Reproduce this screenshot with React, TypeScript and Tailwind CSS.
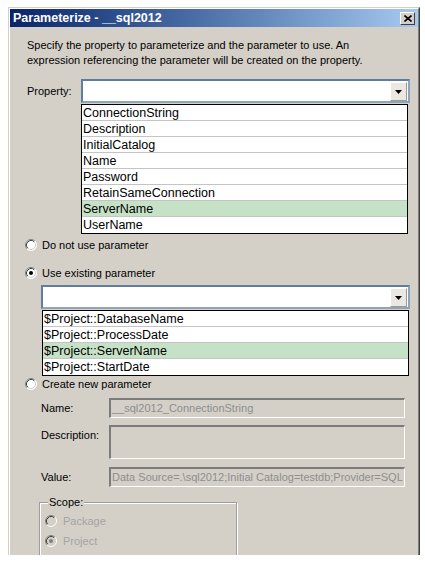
import React from 'react';

const propertyItems = [
  'ConnectionString',
  'Description',
  'InitialCatalog',
  'Name',
  'Password',
  'RetainSameConnection',
  'ServerName',
  'UserName',
];

const paramItems = [
  '$Project::DatabaseName',
  '$Project::ProcessDate',
  '$Project::ServerName',
  '$Project::StartDate',
];

const Radio = ({ checked = false, disabled = false }: { checked?: boolean; disabled?: boolean }) => (
  <svg width="12" height="12" viewBox="0 0 12 12" className="shrink-0">
    <circle cx="6" cy="6" r="5.5" fill={disabled ? '#d4d0c8' : '#ffffff'} />
    <path d="M2.11 9.89A5.5 5.5 0 0 1 9.89 2.11" fill="none" stroke="#808080" />
    <path d="M9.89 2.11A5.5 5.5 0 0 1 2.11 9.89" fill="none" stroke="#ffffff" />
    <path d="M2.82 9.18A4.5 4.5 0 0 1 9.18 2.82" fill="none" stroke="#404040" />
    <path d="M9.18 2.82A4.5 4.5 0 0 1 2.82 9.18" fill="none" stroke="#d4d0c8" />
    {checked && <circle cx="6" cy="6" r="2" fill={disabled ? '#808080' : '#000000'} />}
  </svg>
);

const Combo = ({ className }: { className: string }) => (
  <div
    className={`h-[24px] flex items-center justify-end bg-white border-2 border-t-[#5f7d9e] border-l-[#5f7d9e] border-r-[#8ea4bb] border-b-[#8ea4bb] ${className}`}
  >
    <div className="w-[17px] h-[19px] mr-[1px] mt-[1px] bg-[#ebe8e1] border border-t-white border-l-white border-r-[#9a9a9a] border-b-[#9a9a9a] flex items-center justify-center">
      <svg width="7" height="4" viewBox="0 0 7 4">
        <path d="M0 0h7L3.5 4z" fill="#000" />
      </svg>
    </div>
  </div>
);

const DropList = ({ items, selected, className }: { items: string[]; selected: string; className: string }) => (
  <div className={`bg-white border border-black ${className}`}>
    {items.map((it, i) => (
      <div
        key={it}
        className={`h-[16px] pl-[1px] leading-[16px] text-[12.5px] text-black whitespace-nowrap ${
          i < items.length - 1 ? 'border-b border-[#c4c4c4]' : ''
        } ${it === selected ? 'bg-[#c6e2c6]' : ''}`}
      >
        {it}
      </div>
    ))}
  </div>
);

const Field = ({ h, children }: { h: string; children?: React.ReactNode }) => (
  <div
    className={`w-[296px] ${h} bg-[#d4d0c8] border-t-2 border-l-2 border-r border-b border-t-[#7c7c7c] border-l-[#7c7c7c] border-r-white border-b-white overflow-hidden whitespace-nowrap text-[11px] text-[#8e8e8e] pl-[1px] leading-[16px]`}
  >
    {children}
  </div>
);

export default function App() {
  return (
    <div className="w-[425px] h-[563px] bg-white overflow-hidden pt-[7px] pl-[8px] font-['Liberation_Sans',Arial,sans-serif] text-black">
      <div className="w-[412px] h-[548px] border-l border-t border-r border-l-[#d4d0c8] border-t-[#d4d0c8] border-r-[#404040]">
        <div className="h-full bg-[#d4d0c8] border-l border-t border-r border-l-white border-t-white border-r-[#808080] overflow-hidden">
          {/* Title bar */}
          <div className="h-[18px] bg-linear-to-r from-[#0a246a] to-[#a6caf0] flex items-center justify-between pl-[3px] pr-[3px]">
            <span className="text-white font-bold text-[12.5px] leading-none">Parameterize - __sql2012</span>
            <div className="w-[15px] h-[13px] bg-[#d4d0c8] border border-t-white border-l-white border-r-[#404040] border-b-[#404040] flex items-center justify-center">
              <svg width="8" height="7" viewBox="0 0 8 7">
                <path d="M0.5 0.5L7.5 6.5M7.5 0.5L0.5 6.5" stroke="#000" strokeWidth="1.6" />
              </svg>
            </div>
          </div>

          {/* Intro text */}
          <p className="mt-[11px] ml-[17px] text-[11px] leading-[15px] whitespace-nowrap">
            Specify the property to parameterize and the parameter to use. An
            <br />
            expression referencing the parameter will be created on the property.
          </p>

          {/* Property */}
          <div className="mt-[11px] flex items-center">
            <span className="ml-[17px] w-[54px] text-[11px]">Property:</span>
            <Combo className="w-[329px]" />
          </div>
          <DropList items={propertyItems} selected="ServerName" className="mt-[1px] ml-[71px] w-[327px]" />

          {/* Options */}
          <div className="mt-[3px] ml-[15px] h-[16px] flex items-center gap-[5px] text-[11px]">
            <Radio />
            <span>Do not use parameter</span>
          </div>
          <div className="mt-[12px] ml-[15px] h-[16px] flex items-center gap-[5px] text-[11px]">
            <Radio checked />
            <span>Use existing parameter</span>
          </div>
          <Combo className="mt-[4px] ml-[31px] w-[369px]" />
          <DropList items={paramItems} selected="$Project::ServerName" className="mt-[1px] ml-[32px] w-[367px]" />
          <div className="ml-[15px] h-[16px] flex items-center gap-[5px] text-[11px]">
            <Radio />
            <span>Create new parameter</span>
          </div>

          {/* New parameter fields */}
          <div className="mt-[6px] ml-[31px] flex items-center text-[11px]">
            <span className="w-[68px]">Name:</span>
            <Field h="h-[20px]">__sql2012_ConnectionString</Field>
          </div>
          <div className="mt-[7px] ml-[31px] flex items-start text-[11px]">
            <span className="w-[68px] pt-[3px] leading-[15px]">Description:</span>
            <Field h="h-[34px]" />
          </div>
          <div className="mt-[8px] ml-[31px] flex items-center text-[11px]">
            <span className="w-[68px]">Value:</span>
            <Field h="h-[20px]">Data Source=.\sql2012;Initial Catalog=testdb;Provider=SQL</Field>
          </div>

          {/* Scope */}
          <fieldset className="mt-[8px] ml-[29px] w-[198px] h-[90px] border border-[#9c9c9c] shadow-[inset_1px_1px_0_#ffffff,1px_1px_0_#ffffff] px-[5px]">
            <legend className="ml-[3px] px-[1px] bg-[#d4d0c8] text-[11px] leading-[15px]">Scope:</legend>
            <div className="mt-[3px] h-[16px] flex items-center gap-[6px] text-[11px] text-[#a4a4a4]">
              <Radio disabled />
              <span>Package</span>
            </div>
            <div className="mt-[4px] h-[16px] flex items-center gap-[6px] text-[11px] text-[#a4a4a4]">
              <Radio checked disabled />
              <span>Project</span>
            </div>
          </fieldset>
        </div>
      </div>
    </div>
  );
}
